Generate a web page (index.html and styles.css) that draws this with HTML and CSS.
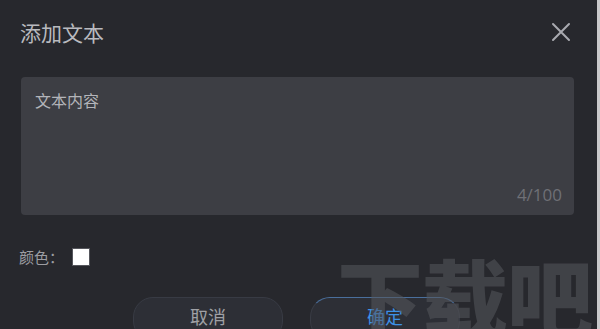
FILE: index.html
```html
<html>
<head>
<title>添加文本</title>
<link rel="stylesheet" href="styles.css">
</head>
<body>

<div class="dialog">
  <div class="head">
    <span class="title">添加文本</span>
    <svg class="close" width="20" height="20" viewBox="0 0 20 20">
      <path d="M2 2 L18 18 M18 2 L2 18" stroke="#a9aab0" stroke-width="2" stroke-linecap="round"/>
    </svg>
  </div>

  <div class="box">
    <div class="placeholder">文本内容</div>
    <div class="count">4/100</div>
  </div>

  <div class="color">
    <span>颜色：</span>
    <span class="swatch"></span>
  </div>

  <div class="actions">
    <button class="btn">取消</button>
    <button class="btn ok">确定</button>
  </div>

  <div class="mark">下载吧</div>
</div>

</body>
</html>
```

FILE: styles.css
```css
body {
  margin: 0;
  background: #c9c9cb;
  font-family: "Noto Sans CJK SC", "Noto Sans", sans-serif;
  overflow: hidden;
}

.dialog {
  position: relative;
  width: 597px;
  height: 329px;
  background: #27282d;
  overflow: hidden;
}

.head {
  display: flex;
  justify-content: space-between;
  align-items: center;
  padding: 19px 26px 0 20px;
  height: 26px;
}

.title {
  font-size: 21px;
  color: #b9babf;
}

.box {
  margin: 32px 23px 0 21px;
  height: 138px;
  background: #3d3e44;
  border-radius: 4px;
  display: flex;
  flex-direction: column;
  justify-content: space-between;
  padding: 11px 12px 9px 14px;
  box-sizing: border-box;
}

.placeholder {
  font-size: 16px;
  color: #b3b4b9;
}

.count {
  align-self: flex-end;
  font-size: 17px;
  color: #6f7076;
  font-family: "Open Sans", sans-serif;
}

.color {
  display: flex;
  align-items: center;
  margin: 31px 0 0 19px;
  font-size: 15px;
  color: #9c9da2;
}

.swatch {
  width: 16px;
  height: 16px;
  background: #fff;
  border: 1px solid #55565c;
  margin-left: 8px;
}

.actions {
  display: flex;
  gap: 27px;
  margin: 30px 0 0 133px;
}

.btn {
  width: 150px;
  height: 44px;
  border-radius: 20px;
  background: #2d2f36;
  border: 1px solid #383b44;
  color: #9fa0a5;
  font-size: 18px;
  font-family: "Noto Sans CJK SC", sans-serif;
  padding: 0 0 6px 0;
  align-self: flex-start;
}

.ok {
  color: #3d91e6;
  border-top-color: #4a6f9c;
}

.mark {
  position: absolute;
  left: 337px;
  top: 236px;
  font-size: 86px;
  font-weight: 900;
  letter-spacing: -1px;
  white-space: nowrap;
  color: rgba(85, 87, 93, 0.55);
  font-family: "Noto Sans CJK SC", sans-serif;
  line-height: 1.4;
}
```
